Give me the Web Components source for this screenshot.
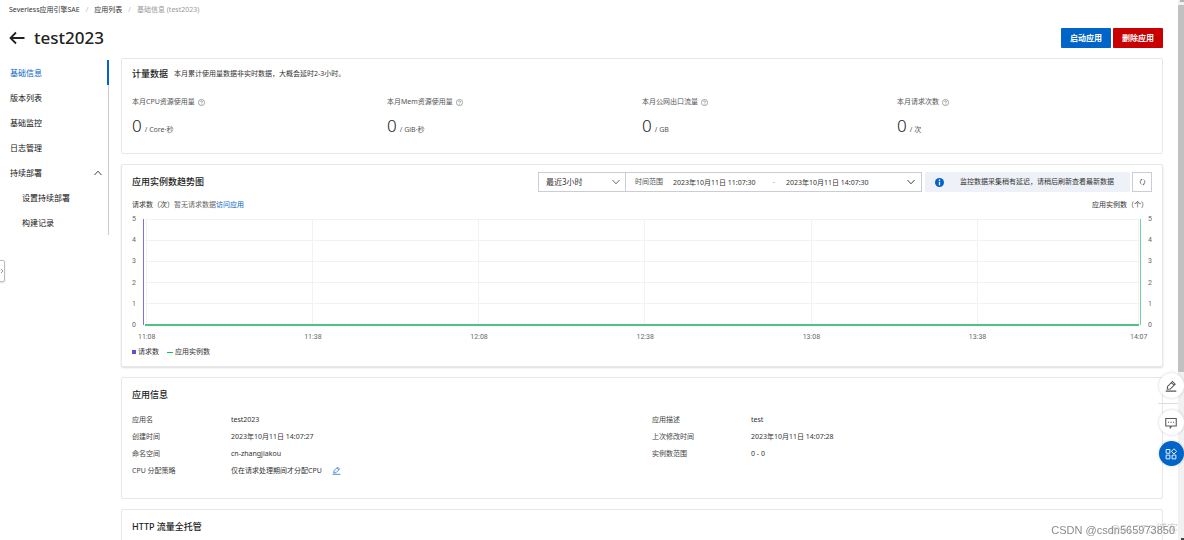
<!DOCTYPE html>
<html lang="zh-CN">
<head>
<meta charset="utf-8">
<title>test2023 - 基础信息</title>
<style>
  html, body { margin: 0; height: 100%; }
  body {
    font-family: "Noto Sans", "Noto Sans CJK SC", sans-serif;
    font-size: 8px; line-height: 12px; color: #333; background: #fff; overflow: hidden;
    --blue: #0064c8; --line: #e6e7e9; --field: #c8cdd6;
  }
</style>
</head>
<body>
<sae-app></sae-app>
<script>
const define = (name, html, setup) => {
  const template = document.createElement('template');
  template.innerHTML = html;
  customElements.define(name, class extends HTMLElement {
    constructor() {
      super();
      this.attachShadow({ mode: 'open' }).append(template.content.cloneNode(true));
    }
    connectedCallback() { if (setup) setup(this, this.shadowRoot); }
  });
};

define('sae-header', `
<style>
  :host { display: block; }
  nav { display: flex; gap: 6px; padding: 4px 9px; font-size: 7px; line-height: 12px; }
  a { color: #333; text-decoration: none; }
  nav i { color: #bbb; font-style: normal; }
  nav .now { color: #999; }
  .bar { display: flex; align-items: center; height: 20px; padding: 8px 15px 10px 9px; }
  .back { display: flex; padding: 0; border: 0; background: none; margin-right: 9px; }
  h1 { margin: 0; flex: 1; font-size: 17px; line-height: 20px; font-weight: 500; color: #222; }
  .act { height: 20px; width: 50px; padding: 0; border: 0; border-radius: 1px; margin-left: 2px;
    font: 700 8px/20px "Noto Sans CJK SC", sans-serif; color: #fff; background: var(--blue); }
  .red { background: #c80000; }
</style>
<nav aria-label="breadcrumb"><a href="#">Severless应用引擎SAE</a><i>/</i><a href="#">应用列表</a><i>/</i><span class="now">基础信息 (test2023)</span></nav>
<div class="bar">
  <button class="back" aria-label="返回"><svg width="16" height="14" viewBox="0 0 16 14" fill="none" stroke="#222" stroke-width="1.8"><path d="M7 1.5 1.5 7 7 12.5M1.5 7H15.5"/></svg></button>
  <h1>test2023</h1>
  <button class="act">启动应用</button><button class="act red">删除应用</button>
</div>`);

define('sae-nav', `
<style>
  :host { display: block; width: 109px; flex: none; }
  ul { list-style: none; margin: 0; padding: 0; border-right: 1px solid #ccc; }
  li { display: flex; align-items: center; height: 25px; padding: 0 5px 0 10px; border-right: 2px solid transparent; margin-right: -1px; }
  a { flex: 1; color: #111; text-decoration: none; }
  .on { border-right-color: var(--blue); }
  .on a { color: var(--blue); }
  .sub { padding-left: 22px; }
</style>
<ul>
  <li class="on"><a href="#">基础信息</a></li>
  <li><a href="#">版本列表</a></li>
  <li><a href="#">基础监控</a></li>
  <li><a href="#">日志管理</a></li>
  <li><a href="#">持续部署</a><svg width="8" height="6" viewBox="0 0 8 6" fill="none" stroke="#444"><path d="M.5 5 4 1.2 7.5 5"/></svg></li>
  <li class="sub"><a href="#">设置持续部署</a></li>
  <li class="sub"><a href="#">构建记录</a></li>
</ul>`);

define('sae-card', `
<style>
  :host { display: block; box-sizing: border-box; border: 1px solid var(--line); border-radius: 2px; padding: 9px 10px; background: #fff; }
  :host([compact]) { padding: 7px 10px; }
  :host([raised]) { box-shadow: 0 1px 2px #0002; }
  header { display: flex; align-items: center; min-height: 16px; }
  h2 { margin: 0; font-size: 9px; line-height: 16px; font-weight: 500; color: #222; flex: none; }
</style>
<header><h2></h2><slot name="extra"></slot></header>
<slot></slot>`, (el, root) => { root.querySelector('h2').textContent = el.getAttribute('heading'); });

define('sae-metric', `
<style>
  :host { display: block; }
  .label { display: flex; align-items: center; gap: 3px; color: #555; font-size: 7px; line-height: 12px; }
  .value { display: flex; align-items: baseline; gap: 3px; margin-top: 8px; color: #555; font-size: 7px; line-height: 20px; }
  b { font-size: 17px; font-weight: 300; color: #222; }
</style>
<div class="label"><slot></slot><svg width="7" height="7" viewBox="0 0 14 14" fill="none" stroke="#777" stroke-width="1.3"><circle cx="7" cy="7" r="6.2"/><path d="M5 5.7C5 3 9 3 9 5.6 9 7 7 7 7 8.6M7 9.8V11"/></svg></div>
<div class="value"><b>0</b><span></span></div>`, (el, root) => { root.querySelector('span').textContent = '/ ' + el.getAttribute('unit'); });

define('sae-toolbar', `
<style>
  :host { display: flex; height: 20px; margin-left: auto; color: #333; font-size: 7px; }
  .box { box-sizing: border-box; height: 20px; border: 1px solid var(--field); display: flex; align-items: center; background: #fff; }
  .pick { width: 88px; position: relative; }
  select { appearance: none; border: 0; background: none; width: 100%; height: 18px; padding: 0 7px; font: inherit; font-size: 8px; color: #333; }
  .pick svg { position: absolute; right: 5px; pointer-events: none; }
  .range { width: 297px; margin-left: -1px; padding: 0 6px 0 9px; }
  .range label { width: 38px; color: #555; }
  input { border: 0; padding: 0; margin: 0; width: 89px; height: 18px; font: inherit; color: #333; background: none; }
  .dash { width: 24px; color: #999; text-align: center; }
  .range svg { margin-left: auto; }
  .tip { display: flex; align-items: center; box-sizing: border-box; width: 205px; margin: 0 2px 0 3px; padding-left: 10px; background: #eef2f8; border-radius: 1px; white-space: nowrap; font-size: 7px; }
  .tip span { flex: 1; text-align: center; }
  button.box { width: 20px; padding: 0; justify-content: center; }
</style>
<div class="box pick"><select aria-label="时间"><option>最近3小时</option></select><svg width="8" height="6" viewBox="0 0 8 6" fill="none" stroke="#666"><path d="M.5 1 4 4.8 7.5 1"/></svg></div>
<div class="box range"><label for="from">时间范围</label><input id="from" value="2023年10月11日 11:07:30"><span class="dash">-</span><input aria-label="结束时间" value="2023年10月11日 14:07:30"><svg width="8" height="6" viewBox="0 0 8 6" fill="none" stroke="#444"><path d="M.5 1 4 4.8 7.5 1"/></svg></div>
<div class="tip"><svg width="9" height="9" viewBox="0 0 9 9"><circle cx="4.5" cy="4.5" r="4.5" fill="#0064c8"/><path d="M4.5 1.5V3M4.5 3.8V7.3" stroke="#fff" stroke-width="1.3"/></svg><span>监控数据采集稍有延迟，请稍后刷新查看最新数据</span></div>
<button class="box" aria-label="刷新"><svg width="7" height="8" viewBox="0 0 14 16" fill="none" stroke="#555" stroke-width="1.5"><path d="M6 3.2A5 5 0 0 0 5 12.5M8 12.800A5 5 0 0 0 9 3.500M3.500 2.800H6.500M10.500 13.200H7.500"/></svg></button>`);

define('sae-chart', `
<style>
  :host { display: block; }
  .head { display: flex; justify-content: space-between; margin-top: 7px; padding-right: 4px; font-size: 7px; }
  .head em { font-style: normal; color: #666; }
  a { color: var(--blue); text-decoration: none; }
  .plot { display: grid; grid-template-columns: 11px 1fr 11px; margin-top: 2px; font: 7px/12px Roboto, "Noto Sans", sans-serif; color: #666; }
  .y { display: flex; flex-direction: column; justify-content: space-between; height: 118px; }
  .y.r { align-items: flex-end; }
  svg.area { display: block; width: 100%; height: 108px; margin-top: 6px; }
  .x { display: grid; grid-template-columns: 166fr 166fr 166fr 166fr 166fr 161fr 18px; padding: 0 4px 0 6px; font: 7px/12px Roboto, "Noto Sans", sans-serif; color: #666; }
  .legend { display: flex; gap: 8px; margin-top: 2px; font-size: 7px; line-height: 14px; }
  .legend span { display: flex; align-items: center; gap: 2px; }
  .sq { width: 4px; height: 4px; background: #5b4fd6; }
  .ln { width: 6px; height: 1px; background: #1eb26a; }
</style>
<div class="head"><div>请求数（次）<em>暂无请求数据</em><a href="#">访问应用</a></div><div>应用实例数（个）</div></div>
<div class="plot">
  <div class="y"><span>5</span><span>4</span><span>3</span><span>2</span><span>1</span><span>0</span></div>
  <svg class="area" viewBox="0 0 998 108" preserveAspectRatio="none" fill="none">
    <path d="M2 .5H998M2 21.5H998M2 42.5H998M2 63.5H998M2 84.5H998M169.5 0V106M335.5 0V106M501.5 0V106M668.5 0V106M834.5 0V106M995.5 0V106M3.5 0V106" stroke="#f2f2f3"/>
    <path d="M.5 0V106" stroke="#7a73f0"/>
    <path d="M997.5 0V106" stroke="#6fd0a0"/>
    <path d="M2 106H996" stroke="#4fc387" stroke-width="2"/>
  </svg>
  <div class="y r"><span>5</span><span>4</span><span>3</span><span>2</span><span>1</span><span>0</span></div>
</div>
<div class="x"><span>11:08</span><span>11:38</span><span>12:08</span><span>12:38</span><span>13:08</span><span>13:38</span><span>14:07</span></div>
<div class="legend"><span><i class="sq"></i>请求数</span><span><i class="ln"></i>应用实例数</span></div>`);

define('sae-info', `
<style>
  :host { display: grid; grid-template-columns: 1fr 1fr; column-gap: 20px; }
  dl { display: grid; grid-template-columns: 99px 1fr; grid-auto-rows: 17px; align-content: start; margin: 0; line-height: 17px; font-size: 7px; }
  dt { color: #444; }
  dd { margin: 0; color: #333; display: flex; align-items: center; gap: 10px; }
  button { display: flex; padding: 0; border: 0; background: none; }
</style>
<dl>
  <dt>应用名</dt><dd>test2023</dd>
  <dt>创建时间</dt><dd>2023年10月11日 14:07:27</dd>
  <dt>命名空间</dt><dd>cn-zhangjiakou</dd>
  <dt>CPU 分配策略</dt><dd>仅在请求处理期间才分配CPU <button aria-label="编辑"><svg width="9" height="9" viewBox="0 0 16 16" fill="none" stroke="#2f7fdc" stroke-width="1.5"><path d="M3 12.5 3.5 8.5 10 2 13.5 5.5 7 12ZM8.5 3.5 12 7M1 14.8H15"/></svg></button></dd>
</dl>
<dl>
  <dt>应用描述</dt><dd>test</dd>
  <dt>上次修改时间</dt><dd>2023年10月11日 14:07:28</dd>
  <dt>实例数范围</dt><dd>0 - 0</dd>
</dl>`);

define('sae-float', `
<style>
  :host { position: fixed; right: 0; top: 373px; width: 26px; display: flex; flex-direction: column; align-items: center; }
  button { width: 25px; height: 25px; padding: 0; border: 0; border-radius: 50%; background: #fff; box-shadow: 0 0 3px #0003; display: flex; align-items: center; justify-content: center; }
  hr { width: 20px; margin: 5px 6px 6px 0; border: 0; border-top: 1px solid #ddd; }
  .blue { background: var(--blue); margin-top: 6px; }
</style>
<button aria-label="编辑"><svg width="12" height="12" viewBox="0 0 16 16" fill="none" stroke="#555" stroke-width="1.4"><path d="M3 12.3 3.4 8.6 10 2 13.5 5.5 7 12ZM8.5 3.5 12 7M1 14.8H15"/></svg></button>
<hr>
<button aria-label="反馈"><svg width="12" height="12" viewBox="0 0 16 16" fill="none" stroke="#555" stroke-width="1.4"><path d="M1 2H15V12H9L7 14.5V12H1ZM4 7H5.5M7.3 7H8.8M10.6 7H12.1"/></svg></button>
<button class="blue" aria-label="工具"><svg width="12" height="12" viewBox="0 0 16 16" fill="none" stroke="#fff" stroke-width="1.2"><path d="M1.5 2H6.5V7H1.5ZM1.5 9.5H6.5V14.5H1.5ZM9.5 9.5H14.5V14.5H9.5ZM12 1 15.5 4.5 12 8 8.5 4.5Z"/></svg></button>`);

define('sae-scrollbar', `
<style>
  :host { display: flex; flex-direction: column; width: 6px; flex: none; background: #f1f1f1; }
  svg { display: block; }
  .end { height: 5px; flex: none; }
  .thumb { height: 68%; background: #c1c1c1; }
  .rest { flex: 1; }
</style>
<div class="end"><svg width="6" height="2"><path d="M2 1H6" stroke="#777"/></svg></div><div class="thumb"></div><div class="rest"></div><svg width="6" height="2"><path d="M3 1H6" stroke="#444" stroke-width="2"/></svg>`);

define('sae-app', `
<style>
  :host { display: flex; height: 100vh; overflow: hidden; }
  .page { flex: 1; min-width: 0; overflow: hidden; }
  .body { display: flex; align-items: flex-start; gap: 12px; padding-right: 15px; }
  sae-nav { margin-top: 2px; }
  main { flex: 1; min-width: 0; display: flex; flex-direction: column; gap: 10px; }
  .note { margin-left: 6px; color: #333; font-size: 7px; }
  .metrics { display: grid; grid-template-columns: repeat(4, 1fr); margin: 14px 0 6px; }
  sae-info { margin: 8px 0 10px; }
  .http { min-height: 80px; }
  .handle { position: fixed; left: -1px; top: 260px; width: 6px; height: 22px; padding: 0; border: 1px solid #bbb; border-radius: 0 2px 2px 0; background: #fff; box-shadow: 0 1px 2px #0002; display: flex; align-items: center; }
  .mark, .mark2 { position: fixed; white-space: nowrap; font: 11px/14px "Liberation Sans", "Noto Sans CJK SC", sans-serif; pointer-events: none; }
  .mark { right: 9px; bottom: 3px; color: #8c8c8c; text-shadow: 1px 1px 0 #fff; }
  .mark2 { right: 6px; bottom: 4px; color: #d0d0d0; }
</style>
<div class="page">
  <sae-header></sae-header>
  <div class="body">
    <sae-nav></sae-nav>
    <main>
      <sae-card compact heading="计量数据"><span slot="extra" class="note">本月累计使用量数据非实时数据，大概会延时2-3小时。</span>
        <div class="metrics">
          <sae-metric unit="Core·秒">本月CPU资源使用量</sae-metric>
          <sae-metric unit="GiB·秒">本月Mem资源使用量</sae-metric>
          <sae-metric unit="GB">本月公网出口流量</sae-metric>
          <sae-metric unit="次">本月请求次数</sae-metric>
        </div>
      </sae-card>
      <sae-card compact raised heading="应用实例数趋势图"><sae-toolbar slot="extra"></sae-toolbar><sae-chart></sae-chart></sae-card>
      <sae-card heading="应用信息"><sae-info></sae-info></sae-card>
      <sae-card heading="HTTP 流量全托管"><div class="http"></div></sae-card>
    </main>
  </div>
</div>
<sae-scrollbar></sae-scrollbar>
<button class="handle" aria-label="展开"><svg width="4" height="6" viewBox="0 0 4 6" fill="none" stroke="#999"><path d="M1 1 3 3 1 5"/></svg></button>
<div class="mark2">@51CTO博客</div>
<div class="mark">CSDN @csdn565973850</div>
<sae-float></sae-float>`);
</script>
</body>
</html>
